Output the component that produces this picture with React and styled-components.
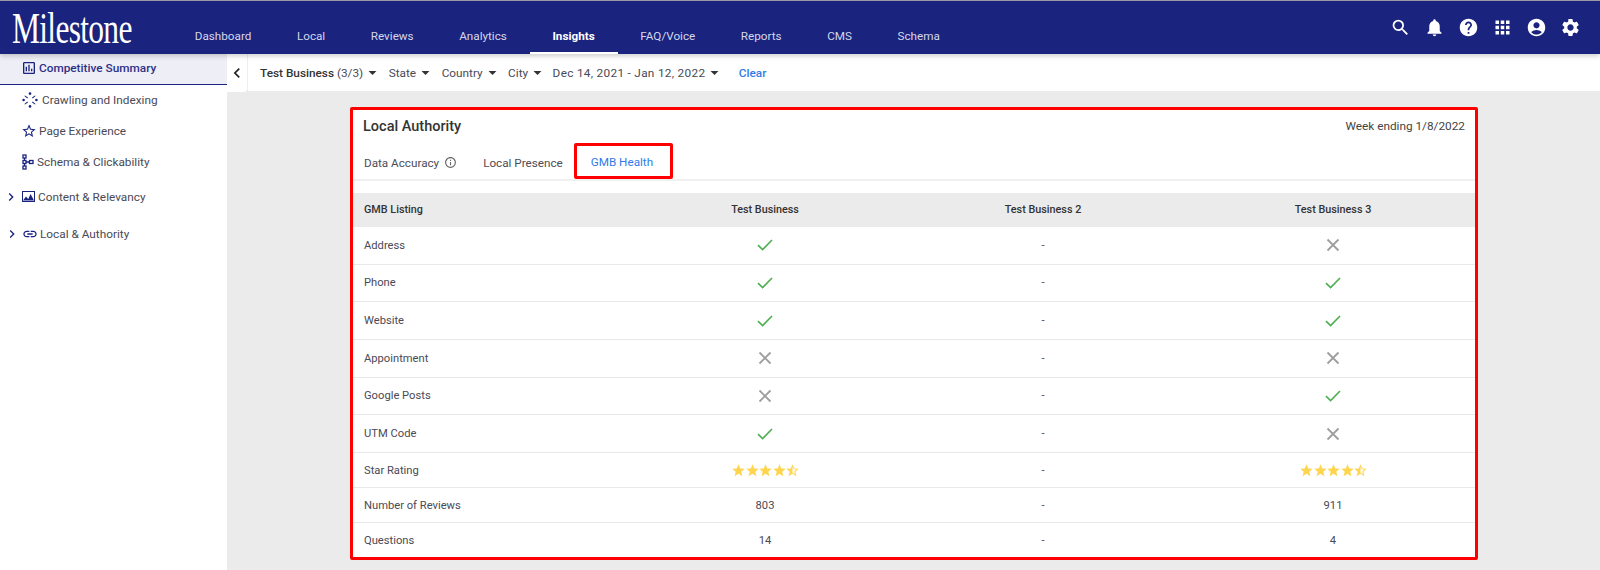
import React from "react";
import styled, { createGlobalStyle } from "styled-components";
import {
  MdSearch,
  MdNotifications,
  MdHelp,
  MdApps,
  MdAccountCircle,
  MdSettings,
  MdChevronLeft,
  MdChevronRight,
  MdInfoOutline,
  MdOutlineAssessment,
  MdStarBorder,
  MdStar,
  MdStarHalf,
  MdLink,
  MdArrowDropDown,
} from "react-icons/md";

const navy = "#1a237e";
const red = "#ff0000";
const blue = "#2f7be8";
const bg = "#ebebeb";
const textColor = "#4a4a55";

const GlobalStyle = createGlobalStyle`
  html, body {
    margin: 0;
    padding: 0;
    background: ${bg};
    font-family: Roboto, "Liberation Sans", sans-serif;
    overflow: hidden;
  }
`;

const navItems = ["Dashboard", "Local", "Reviews", "Analytics", "Insights", "FAQ/Voice", "Reports", "CMS", "Schema"];

const rows = [
  { label: "Address", values: ["yes", "-", "no"] },
  { label: "Phone", values: ["yes", "-", "yes"] },
  { label: "Website", values: ["yes", "-", "yes"] },
  { label: "Appointment", values: ["no", "-", "no"] },
  { label: "Google Posts", values: ["no", "-", "yes"] },
  { label: "UTM Code", values: ["yes", "-", "no"] },
  { label: "Star Rating", values: ["stars", "-", "stars"], height: 35 },
  { label: "Number of Reviews", values: ["803", "-", "911"], height: 35 },
  { label: "Questions", values: ["14", "-", "4"], height: 34, last: true },
];

function CrawlIcon() {
  return (
    <svg width="16" height="16" viewBox="0 0 16 16" fill={navy}>
      <circle cx="8" cy="1.6" r="1.3" />
      <circle cx="8" cy="14.4" r="1.3" />
      <circle cx="1.6" cy="8" r="1.3" />
      <circle cx="14.4" cy="8" r="1.3" />
      <path d="M3 3.4l3 2.2-.7.8-2.9-2.3zM13 3.4l-3 2.2.7.8 2.9-2.3zM3 12.6l3-2.2-.7-.8-2.9 2.3zM13 12.6l-3-2.2.7-.8 2.9 2.3z" />
    </svg>
  );
}

function SchemaIcon() {
  return (
    <svg width="12" height="16" viewBox="0 0 12 16" fill="none" stroke={navy} strokeWidth="1.3">
      <rect x="1" y="1" width="3" height="3" />
      <rect x="1" y="6.5" width="3" height="3" />
      <rect x="1" y="12" width="3" height="3" />
      <rect x="7.5" y="6.5" width="3.5" height="3" />
      <path d="M2.5 4v2.5M2.5 9.5V12M4 8h3.5" />
    </svg>
  );
}

function PictureIcon() {
  return (
    <svg width="13" height="11" viewBox="0 0 13 11">
      <rect x="0.5" y="0.5" width="12" height="10" fill="none" stroke={navy} />
      <path d="M1 9.5l3-4 2.2 2.4L8.6 3 12 9.5z" fill={navy} />
    </svg>
  );
}

function CheckIcon() {
  return (
    <svg width="16" height="12" viewBox="0 0 16 12" fill="none" stroke="#4caf50" strokeWidth="1.6">
      <path d="M1 6.2l4.6 4.4L15 1" />
    </svg>
  );
}

function CrossIcon() {
  return (
    <svg width="14" height="14" viewBox="0 0 14 14" fill="none" stroke="#9e9e9e" strokeWidth="1.8">
      <path d="M1.5 1.5l11 11M12.5 1.5l-11 11" />
    </svg>
  );
}

function Stars() {
  return (
    <StarRow>
      <MdStar />
      <MdStar />
      <MdStar />
      <MdStar />
      <MdStarHalf />
    </StarRow>
  );
}

function CellValue({ value }) {
  if (value === "yes") return <CheckIcon />;
  if (value === "no") return <CrossIcon />;
  if (value === "stars") return <Stars />;
  return value;
}

function Filter({ children, wide }) {
  return (
    <FilterItem $wide={wide}>
      {children}
      <MdArrowDropDown />
    </FilterItem>
  );
}

export default function App() {
  return (
    <Page>
      <GlobalStyle />
      <Header>
        <Logo>
          <LogoText>Milestone</LogoText>
        </Logo>
        <Nav>
          {navItems.map((item) => (
            <NavItem key={item} $active={item === "Insights"}>
              {item}
            </NavItem>
          ))}
        </Nav>
        <HeaderIcons>
          <MdSearch />
          <MdNotifications />
          <MdHelp />
          <MdApps />
          <MdAccountCircle />
          <MdSettings />
        </HeaderIcons>
      </Header>

      <Body>
        <Sidebar>
          <SideRow $active $indent={21} $gap={2}>
            <MdOutlineAssessment />
            Competitive Summary
          </SideRow>
          <SideRow $indent={22} $gap={4} $height={30}>
            <CrawlIcon />
            Crawling and Indexing
          </SideRow>
          <SideRow $indent={21} $gap={2} $height={32}>
            <MdStarBorder />
            Page Experience
          </SideRow>
          <SideRow $indent={22} $gap={3} $height={30}>
            <SchemaIcon />
            Schema &amp; Clickability
          </SideRow>
          <SideRow $indent={3} $gap={3} $height={39}>
            <MdChevronRight />
            <PictureIcon />
            Content &amp; Relevancy
          </SideRow>
          <SideRow $indent={4} $gap={2} $height={35}>
            <MdChevronRight />
            <MdLink />
            Local &amp; Authority
          </SideRow>
        </Sidebar>

        <Main>
          <TopRow>
            <Collapse>
              <MdChevronLeft />
            </Collapse>
            <FilterBar>
              <Filter>
                <strong>Test Business</strong>&nbsp;(3/3)
              </Filter>
              <Filter>State</Filter>
              <Filter>Country</Filter>
              <Filter>City</Filter>
              <Filter wide>Dec 14, 2021 - Jan 12, 2022</Filter>
              <ClearLink>Clear</ClearLink>
            </FilterBar>
          </TopRow>

          <Card>
            <CardHead>
              <CardTitle>Local Authority</CardTitle>
              <WeekEnding>Week ending 1/8/2022</WeekEnding>
            </CardHead>
            <Tabs>
              <Tab>
                Data Accuracy
                <MdInfoOutline />
              </Tab>
              <Tab>Local Presence</Tab>
              <Tab $active>GMB Health</Tab>
            </Tabs>
            <Table>
              <HeadRow>
                <div>GMB Listing</div>
                <Cell>Test Business</Cell>
                <Cell>Test Business 2</Cell>
                <Cell $last>Test Business 3</Cell>
              </HeadRow>
              {rows.map((row) => (
                <Row key={row.label} $height={row.height} $last={row.last}>
                  <div>{row.label}</div>
                  {row.values.map((value, i) => (
                    <Cell key={i} $last={i === 2}>
                      <CellValue value={value} />
                    </Cell>
                  ))}
                </Row>
              ))}
            </Table>
          </Card>
        </Main>
      </Body>
    </Page>
  );
}

const Page = styled.div`
  width: 1600px;
  height: 570px;
  display: flex;
  flex-direction: column;
  overflow: hidden;
  background: ${bg};
`;

const Header = styled.header`
  height: 53px;
  flex: none;
  display: flex;
  align-items: stretch;
  background: ${navy};
  border-top: 1px solid #9a9aa5;
  box-shadow: 0 2px 5px rgba(0, 0, 0, 0.2);
  position: relative;
  z-index: 2;
`;

const Logo = styled.div`
  width: 172px;
  padding-left: 12px;
  box-sizing: border-box;
  flex: none;
  display: flex;
  align-items: center;
  overflow: visible;
`;

const LogoText = styled.span`
  font-family: "Liberation Serif", serif;
  font-size: 45px;
  line-height: 44px;
  color: #fff;
  letter-spacing: -1px;
  display: inline-block;
  transform: scaleX(0.7);
  transform-origin: left center;
`;

const Nav = styled.nav`
  display: flex;
  align-items: stretch;
`;

const NavItem = styled.div`
  display: flex;
  align-items: center;
  padding: 16px 22.8px 0;
  font-size: 11.7px;
  color: ${(p) => (p.$active ? "#fff" : "#d5d7ea")};
  font-weight: ${(p) => (p.$active ? 700 : 400)};
  box-shadow: ${(p) => (p.$active ? "inset 0 -2px 0 #fff" : "none")};
`;

const HeaderIcons = styled.div`
  margin-left: auto;
  padding-right: 19px;
  display: flex;
  align-items: center;
  gap: 13px;
  color: #fff;
  font-size: 21px;

  svg {
    display: block;
  }
`;

const Body = styled.div`
  flex: 1;
  display: flex;
  min-height: 0;
`;

const Sidebar = styled.aside`
  width: 227px;
  flex: none;
  background: #fff;
  font-size: 11.8px;
  color: ${textColor};
`;

const SideRow = styled.div`
  height: ${(p) => (p.$active ? "28px" : `${p.$height || 30}px`)};
  display: flex;
  align-items: center;
  gap: ${(p) => p.$gap}px;
  padding-left: ${(p) => p.$indent}px;
  padding-bottom: ${(p) => (p.$active ? "2px" : 0)};
  color: ${(p) => (p.$active ? "#2c3187" : textColor)};
  background: ${(p) => (p.$active ? "#eeeef6" : "transparent")};
  border-bottom: ${(p) => (p.$active ? `1px solid ${navy}` : "none")};
  font-weight: ${(p) => (p.$active ? 500 : 400)};

  svg {
    flex: none;
    font-size: 16px;
    color: ${navy};
  }
`;

const Main = styled.main`
  flex: 1;
  min-width: 0;
  display: flex;
  flex-direction: column;
  align-items: stretch;
`;

const TopRow = styled.div`
  display: flex;
  height: 37px;
  flex: none;
`;

const Collapse = styled.div`
  width: 20px;
  height: 38px;
  background: #fff;
  display: flex;
  align-items: center;
  justify-content: center;
  font-size: 22px;
  color: #222;
  border-right: 1px solid #eee;
  border-radius: 0 0 4px 0;
`;

const FilterBar = styled.div`
  flex: 1;
  background: #fff;
  display: flex;
  align-items: center;
  padding-left: 12px;
  font-size: 11.8px;
  color: ${textColor};
  gap: 6.5px;

  strong {
    font-weight: 500;
    color: #333;
  }
`;

const FilterItem = styled.div`
  display: flex;
  align-items: center;
  letter-spacing: ${(p) => (p.$wide ? "0.3px" : "normal")};
  margin-left: ${(p) => (p.$wide ? "-1px" : 0)};

  svg {
    font-size: 19px;
    color: #333;
  }
`;

const ClearLink = styled.span`
  color: ${blue};
  font-weight: 500;
  margin-left: 8px;
`;

const Card = styled.section`
  margin: 16px 0 0 123px;
  width: 1128px;
  height: 453px;
  box-sizing: border-box;
  flex: none;
  border: 3px solid ${red};
  border-radius: 2px;
  background: #fff;
  display: flex;
  flex-direction: column;
`;

const CardHead = styled.div`
  display: flex;
  justify-content: space-between;
  align-items: center;
  padding: 5px 10px 0 10px;
  height: 25px;
`;

const CardTitle = styled.h2`
  margin: 0;
  font-size: 14.5px;
  font-weight: 500;
  color: #333;
`;

const WeekEnding = styled.span`
  font-size: 11.8px;
  color: #444;
`;

const Tabs = styled.div`
  height: 39px;
  margin-top: 5px;
  display: flex;
  align-items: flex-end;
  padding-left: 11px;
  border-bottom: 2px solid #f0f0f0;
`;

const Tab = styled.div`
  height: 36px;
  box-sizing: border-box;
  display: flex;
  align-items: center;
  gap: 5px;
  font-size: 11.7px;
  color: ${(p) => (p.$active ? blue : "#4d4d55")};
  margin-right: ${(p) => (p.$active ? 0 : "26px")};
  margin-left: ${(p) => (p.$active ? "-15px" : 0)};
  padding: ${(p) => (p.$active ? "2px 14px 0" : "4px 0 0")};
  width: ${(p) => (p.$active ? "99px" : "auto")};
  border: ${(p) => (p.$active ? `3px solid ${red}` : "none")};
  border-radius: 2px;

  svg {
    font-size: 13px;
    color: #666;
  }
`;

const Table = styled.div`
  margin-top: 12px;
  font-size: 11.2px;
  color: ${textColor};
`;

const gridColumns = "261px 280px 276px 1fr";

const HeadRow = styled.div`
  display: grid;
  grid-template-columns: ${gridColumns};
  align-items: center;
  height: 34px;
  padding-left: 11px;
  box-sizing: border-box;
  background: ${bg};
  font-size: 10.8px;
  font-weight: 500;
  color: #333;
`;

const Row = styled.div`
  display: grid;
  grid-template-columns: ${gridColumns};
  align-items: center;
  height: ${(p) => p.$height || 37.7}px;
  padding-left: 11px;
  box-sizing: border-box;
  border-bottom: ${(p) => (p.$last ? "none" : "1px solid #e8e8e8")};
`;

const Cell = styled.div`
  display: flex;
  justify-content: center;
  align-items: center;
  padding-left: ${(p) => (p.$last ? "10px" : 0)};
`;

const StarRow = styled.div`
  display: flex;
  color: #ffd54f;
  font-size: 15px;

  svg {
    margin-right: -1.5px;
  }
`;
